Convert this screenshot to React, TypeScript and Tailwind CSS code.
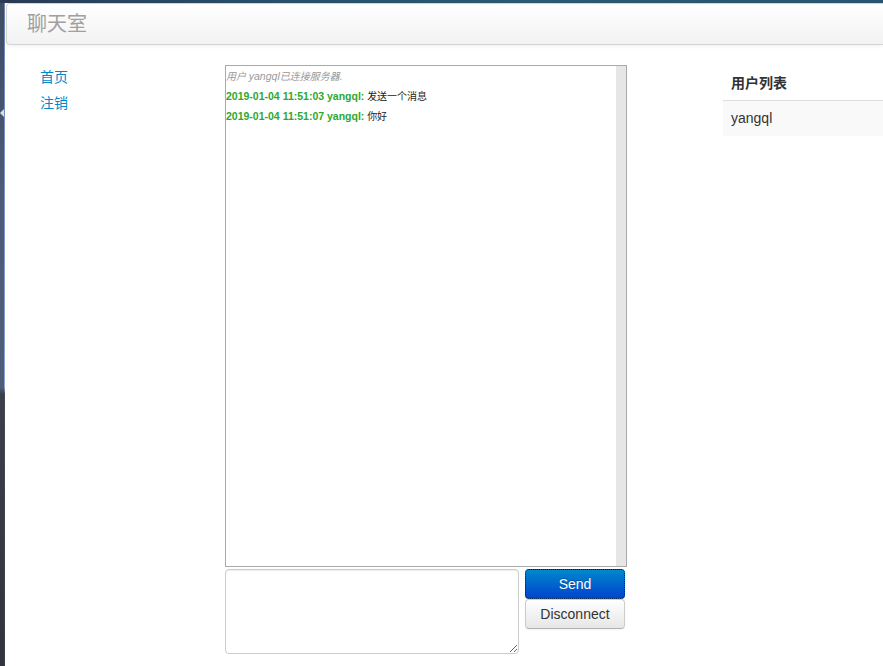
import React from "react";

export default function App() {
  const font = {
    fontFamily:
      '"Liberation Sans", Arial, "Noto Sans CJK SC", sans-serif',
  } as React.CSSProperties;
  return (
    <div
      className="w-[883px] h-[666px] overflow-hidden flex flex-col bg-white relative"
      style={font}
    >
      {/* desktop strip at top */}
      <div className="h-[3px] w-full shrink-0 bg-[linear-gradient(to_right,#2b3a55_0%,#27506a_30%,#2c5a72_60%,#2a5570_100%)]" />
      <div className="flex flex-1 min-h-0">
        {/* desktop strip at left */}
        <div className="w-[4px] shrink-0 bg-[linear-gradient(to_bottom,#3f4c66_0%,#4d5b78_30%,#505d79_58%,#3a3f4a_59%,#30343c_100%)]" />
        <div className="w-[1px] shrink-0 bg-[linear-gradient(to_bottom,#6f86b0_0%,#8aa4d2_58%,#444a55_59%,#3a3e46_100%)]" />
        {/* page */}
        <div className="flex-1 min-w-0 flex flex-col bg-white">
          {/* navbar */}
          <div className="ml-[1px] h-[42px] shrink-0 flex items-center border border-r-0 border-[#d4d4d4] rounded-l-[4px] bg-[linear-gradient(to_bottom,#ffffff,#f2f2f2)] shadow-[0_1px_4px_rgba(0,0,0,0.065)] pl-[20px]">
            <span className="text-[20px] leading-[20px] text-[#a0a0a0]">聊天室</span>
          </div>
          {/* content */}
          <div className="flex mt-[20px]">
            {/* left nav */}
            <div className="w-[220px] shrink-0 pl-[35px] -mt-px">
              <a className="block text-[14px] leading-[26px] text-[#0088cc]">首页</a>
              <a className="block text-[14px] leading-[26px] text-[#0088cc]">注销</a>
            </div>
            {/* chat */}
            <div className="w-[402px] shrink-0 flex flex-col">
              <div className="h-[502px] border border-[#aaaaaa] flex">
                <div className="flex-1 text-[10px] leading-[20px] text-[#222]">
                  <div className="h-[20px] overflow-hidden italic text-[#999999]">
                    用户 <span className="text-[10.5px] leading-[20px]">yangql</span>已连接服务器.
                  </div>
                  <div className="h-[20px] overflow-hidden">
                    <span className="font-bold text-[10.5px] leading-[20px] text-[#2ea82e]">2019-01-04 11:51:03 yangql:</span>{" "}
                    发送一个消息
                  </div>
                  <div className="h-[20px] overflow-hidden">
                    <span className="font-bold text-[10.5px] leading-[20px] text-[#2ea82e]">2019-01-04 11:51:07 yangql:</span>{" "}
                    你好
                  </div>
                </div>
                <div className="w-[10px] bg-[#e6e6e6]" />
              </div>
              <div className="flex mt-[2px] gap-[6px]">
                <textarea className="w-[294px] h-[85px] border border-[#cccccc] rounded-[4px] bg-white shadow-[inset_0_1px_1px_rgba(0,0,0,0.075)] outline-none" />
                <div className="w-[100px] flex flex-col">
                  <button className="h-[30px] rounded-[4px] border border-dotted border-[#101830] bg-[linear-gradient(to_bottom,#0088cc,#0044cc)] text-white text-[14px] leading-[20px] [text-shadow:0_-1px_0_rgba(0,0,0,0.25)]">
                    Send
                  </button>
                  <button className="h-[30px] rounded-[4px] border border-[#cccccc] border-b-[#b3b3b3] bg-[linear-gradient(to_bottom,#ffffff,#e6e6e6)] text-[#333333] text-[14px] leading-[20px] shadow-[inset_0_1px_0_rgba(255,255,255,0.2),0_1px_2px_rgba(0,0,0,0.05)]">
                    Disconnect
                  </button>
                </div>
              </div>
            </div>
            {/* user list */}
            <div className="ml-[96px] flex-1 min-w-0">
              <div className="px-[8px] pt-[8px] pb-[7px] text-[14px] leading-[20px] font-bold text-[#333333]">
                用户列表
              </div>
              <div className="border-t border-[#dddddd] bg-[#f9f9f9] px-[8px] py-[7px] text-[14px] leading-[21px] text-[#333333]">
                yangql
              </div>
            </div>
          </div>
        </div>
      </div>
      {/* little desktop arrow on left edge */}
      <div className="absolute left-0 top-[109px] w-0 h-0 border-y-[4px] border-y-transparent border-r-[4px] border-r-[#dddddd]" />
    </div>
  );
}
